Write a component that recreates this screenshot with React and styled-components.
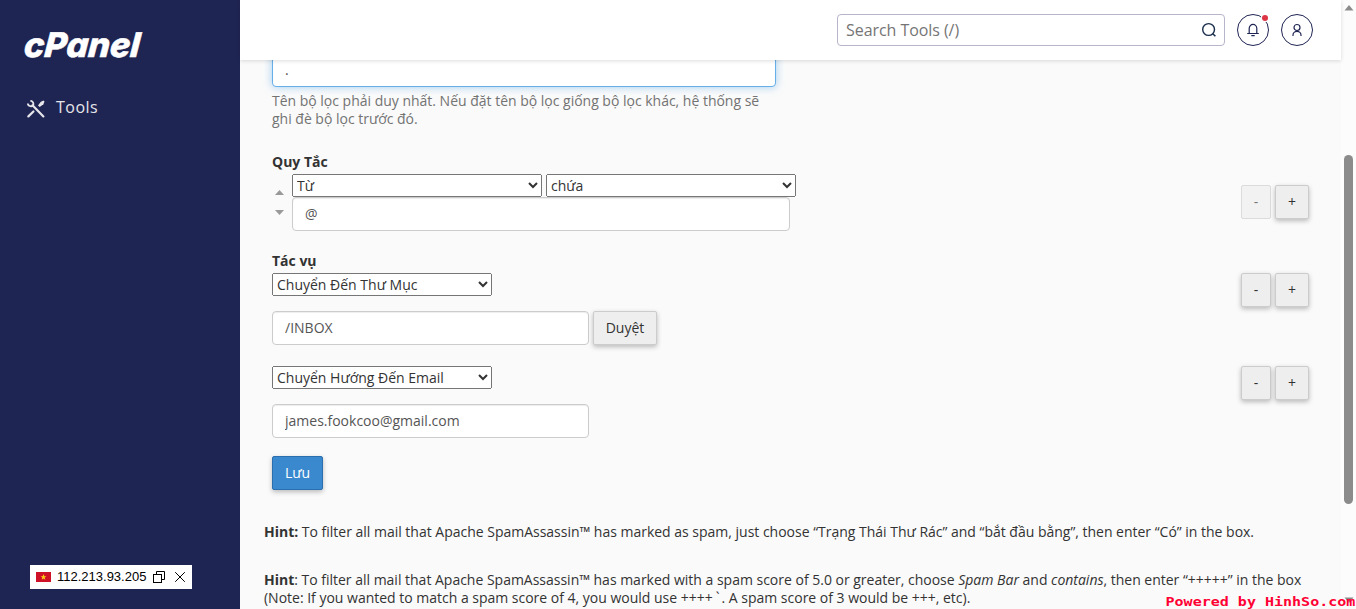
import React, { useState } from "react";
import styled, { createGlobalStyle, css } from "styled-components";

const App = () => {
  const [filterName, setFilterName] = useState(".");
  const [ruleValue, setRuleValue] = useState("@");
  const [folder, setFolder] = useState("/INBOX");
  const [email, setEmail] = useState("james.fookcoo@gmail.com");

  return (
    <>
      <GlobalStyle />
      <Page>
        <Sidebar>
          <Logo viewBox="0 0 120 28" role="img" aria-label="cPanel">
            <text
              x="0"
              y="25"
              textLength="116"
              lengthAdjust="spacingAndGlyphs"
              transform="translate(1.5 0) skewX(-5)"
            >
              cPanel
            </text>
          </Logo>
          <NavItem>
            <ToolsIcon />
            <span>Tools</span>
          </NavItem>
          <IpBadge>
            <FlagIcon />
            <IpText>112.213.93.205</IpText>
            <CopyIcon />
            <CloseIcon />
          </IpBadge>
        </Sidebar>

        <Main>
          <Header>
            <SearchBox>
              <SearchInput placeholder="Search Tools (/)" />
              <SearchIcon />
            </SearchBox>
            <RoundButton>
              <BellIcon />
              <Dot />
            </RoundButton>
            <RoundButton>
              <UserIcon />
            </RoundButton>
          </Header>

          <Content>
            <Form>
              <TextInput
                $width={504}
                $focused
                value={filterName}
                onChange={(e) => setFilterName(e.target.value)}
              />
              <HelpText>
                Tên bộ lọc phải duy nhất. Nếu đặt tên bộ lọc giống bộ lọc khác,
                hệ thống sẽ ghi đè bộ lọc trước đó.
              </HelpText>

              <Label>Quy Tắc</Label>
              <RuleRow>
                <Arrows>
                  <Triangle viewBox="0 0 9 5">
                    <path d="M4.5 0L9 5H0Z" />
                  </Triangle>
                  <Triangle viewBox="0 0 9 5">
                    <path d="M0 0H9L4.5 5Z" />
                  </Triangle>
                </Arrows>
                <RuleFields>
                  <SelectPair>
                    <Select $width={250}>
                      <option>Từ</option>
                    </Select>
                    <Select $width={250}>
                      <option>chứa</option>
                    </Select>
                  </SelectPair>
                  <TextInput
                    $width={498}
                    value={ruleValue}
                    onChange={(e) => setRuleValue(e.target.value)}
                  />
                </RuleFields>
                <Stepper $top={11} minusDisabled />
              </RuleRow>

              <Label $top={21}>Tác vụ</Label>
              <ActionRow>
                <ActionFields>
                  <Select $width={220}>
                    <option>Chuyển Đến Thư Mục</option>
                  </Select>
                  <InputLine>
                    <TextInput
                      $width={317}
                      value={folder}
                      onChange={(e) => setFolder(e.target.value)}
                    />
                    <Button $width={64}>Duyệt</Button>
                  </InputLine>
                </ActionFields>
                <Stepper />
              </ActionRow>
              <ActionRow $top={21}>
                <ActionFields>
                  <Select $width={220}>
                    <option>Chuyển Hướng Đến Email</option>
                  </Select>
                  <TextInput
                    $width={317}
                    value={email}
                    onChange={(e) => setEmail(e.target.value)}
                  />
                </ActionFields>
                <Stepper />
              </ActionRow>

              <SaveButton $width={51}>Lưu</SaveButton>
            </Form>

            <Hint>
              <b>Hint:</b> To filter all mail that Apache SpamAssassin™ has
              marked as spam, just choose “Trạng Thái Thư Rác” and “bắt đầu
              bằng”, then enter “Có” in the box.
            </Hint>
            <Hint>
              <b>Hint</b>: To filter all mail that Apache SpamAssassin™ has
              marked with a spam score of 5.0 or greater, choose{" "}
              <i>Spam Bar</i> and <i>contains</i>, then enter “+++++” in the box
              <br />
              (Note: If you wanted to match a spam score of 4, you would use
              ++++<Tick>`</Tick>. A spam score of 3 would be +++, etc).
            </Hint>
          </Content>
        </Main>

        <ScrollTrack>
          <ScrollArrow viewBox="0 0 10 6">
            <path d="M5 0L9.5 5.5H0.5Z" />
          </ScrollArrow>
          <ScrollThumb />
          <ScrollArrow viewBox="0 0 10 6">
            <path d="M0.5 0.5H9.5L5 6Z" />
          </ScrollArrow>
        </ScrollTrack>
        <Watermark>Powered by HinhSo.com</Watermark>
      </Page>
    </>
  );
};

export default App;

const Stepper = ({ $top = 0, minusDisabled }) => (
  <StepperWrap $top={$top}>
    <Button $width={30} disabled={minusDisabled}>
      -
    </Button>
    <Button $width={34}>+</Button>
  </StepperWrap>
);

const ToolsIcon = () => (
  <svg width="18" height="18" viewBox="0 0 18 18" fill="none">
    <path
      d="M1.4 16.4L6.4 11.5"
      stroke="#e6e6ea"
      strokeWidth="2.2"
      strokeLinecap="round"
    />
    <path
      d="M5.5 5.3L16.4 16.4"
      stroke="#e6e6ea"
      strokeWidth="2.2"
      strokeLinecap="round"
    />
    <path
      d="M3.4 0.8A3.1 3.1 0 0 1 5.9 5.5A3.1 3.1 0 0 1 0.8 3.5"
      stroke="#e6e6ea"
      strokeWidth="1.8"
    />
    <path
      d="M11 5.5L13.6 1.9L16.4 0.6L17.5 1.6L16.4 4.3L12.7 7.1Z"
      fill="#e6e6ea"
    />
  </svg>
);

const FlagIcon = () => (
  <svg width="15" height="10" viewBox="0 0 15 10">
    <rect width="15" height="10" fill="#ce1126" />
    <path
      d="M7.5 2L8.3 4.2H10.4L8.7 5.5L9.3 7.7L7.5 6.4L5.7 7.7L6.3 5.5L4.6 4.2H6.7Z"
      fill="#fcd116"
    />
  </svg>
);

const CopyIcon = () => (
  <svg width="12" height="12" viewBox="0 0 12 12" fill="none" stroke="#000">
    <path d="M3.5 3V0.5H11.5V8.5H8.5" />
    <rect x="0.5" y="3.5" width="8" height="8" />
  </svg>
);

const CloseIcon = () => (
  <svg width="10" height="10" viewBox="0 0 10 10" stroke="#000">
    <path d="M0.2 0.2L9.8 9.8M9.8 0.2L0.2 9.8" />
  </svg>
);

const SearchIcon = () => (
  <svg width="16" height="16" viewBox="0 0 16 16" fill="none" stroke="#1a2e4c">
    <circle cx="7.6" cy="7.5" r="5.9" strokeWidth="1.4" />
    <path d="M11.8 11.7L14.4 14.3" strokeWidth="1.6" />
  </svg>
);

const BellIcon = () => (
  <svg
    width="14"
    height="14"
    viewBox="0 0 14 14"
    fill="none"
    stroke="#1f2553"
    strokeWidth="1.2"
  >
    <path d="M3.2 10.5V5.6A3.8 4.2 0 0 1 10.8 5.6V10.5M1.2 10.5H12.8M5.3 12.7H8.7" />
  </svg>
);

const UserIcon = () => (
  <svg
    width="14"
    height="14"
    viewBox="0 0 14 14"
    fill="none"
    stroke="#1f2553"
    strokeWidth="1.2"
  >
    <circle cx="7" cy="4.5" r="3" />
    <path d="M3 13V12A4 3.6 0 0 1 11 12V13" />
  </svg>
);

const GlobalStyle = createGlobalStyle`
  * {
    box-sizing: border-box;
  }
  body {
    margin: 0;
    overflow: hidden;
    color: #333333;
    font-family: "Open Sans", "Noto Sans", sans-serif;
    font-size: 14px;
    line-height: 18px;
  }
  input, select, button {
    margin: 0;
    font-family: inherit;
    font-size: 14px;
  }
`;

const Page = styled.div`
  position: relative;
  display: flex;
  width: 1356px;
  height: 609px;
  overflow: hidden;
  background-color: #fafafa;
`;

const Sidebar = styled.aside`
  display: flex;
  flex-direction: column;
  align-items: flex-start;
  flex: none;
  width: 240px;
  padding: 32px 0 20px;
  background-color: #1f2553;
`;

const Logo = styled.svg`
  width: 120px;
  height: 28px;
  margin-left: 24px;
  overflow: visible;
  text {
    fill: #ffffff;
    stroke: #ffffff;
    stroke-width: 0.6px;
    font-family: "Inter", sans-serif;
    font-size: 34px;
    font-style: italic;
    font-weight: 800;
  }
`;

const NavItem = styled.div`
  display: flex;
  align-items: center;
  height: 24px;
  margin: 35px 0 0 27px;
  gap: 11px;
  color: #e6e6ea;
  font-size: 16px;
  letter-spacing: 0.5px;
  svg {
    margin-top: 3px;
  }
`;

const IpBadge = styled.div`
  display: flex;
  align-items: center;
  width: 162px;
  height: 24px;
  margin: auto 0 0 30px;
  padding-left: 6px;
  background-color: #ffffff;
  color: #000000;
`;

const IpText = styled.span`
  width: 96px;
  margin-left: 6px;
  font-family: "Liberation Sans", Arial, sans-serif;
  font-size: 13px;
  & + svg + svg {
    margin-left: 10px;
  }
`;

const Main = styled.main`
  display: flex;
  flex-direction: column;
  flex: 1;
  min-width: 0;
`;

const Header = styled.header`
  position: relative;
  z-index: 1;
  display: flex;
  align-items: center;
  justify-content: flex-end;
  flex: none;
  height: 60px;
  padding-right: 28px;
  gap: 12px;
  background-color: #ffffff;
  box-shadow: 0 1px 4px rgba(0, 0, 0, 0.14);
`;

const SearchBox = styled.div`
  display: flex;
  align-items: center;
  width: 388px;
  height: 32px;
  padding: 0 7px 0 8px;
  border: 1px solid #b7b5c9;
  border-radius: 4px;
`;

const SearchInput = styled.input`
  flex: 1;
  padding: 0;
  border: none;
  outline: none;
  background: none;
  font-size: 16px;
  letter-spacing: -0.06px;
  &::placeholder {
    color: #757575;
  }
`;

const RoundButton = styled.div`
  position: relative;
  display: flex;
  align-items: center;
  justify-content: center;
  width: 32px;
  height: 32px;
  border: 1px solid #1f2553;
  border-radius: 50%;
`;

const Dot = styled.span`
  position: absolute;
  top: 0;
  right: 0;
  width: 6px;
  height: 6px;
  border-radius: 50%;
  background-color: #dc3545;
  box-shadow: 0 0 0 1px #ffffff;
`;

const Content = styled.div`
  margin-top: -7px;
  padding: 0 32px 0 24px;
`;

const Form = styled.div`
  padding-left: 8px;
`;

const TextInput = styled.input`
  display: block;
  width: ${({ $width }) => $width}px;
  height: 34px;
  padding: 5px 12px 7px;
  border: 1px solid #cccccc;
  border-radius: 4px;
  outline: none;
  background-color: #ffffff;
  color: #555555;
  box-shadow: inset 0 1px 1px rgba(0, 0, 0, 0.075);
  ${({ $focused }) =>
    $focused &&
    css`
      border-color: #66afe9;
      box-shadow: inset 0 1px 1px rgba(0, 0, 0, 0.075),
        0 0 8px rgba(102, 175, 233, 0.6);
    `}
`;

const HelpText = styled.p`
  width: 504px;
  margin: 5px 0 25px;
  color: #737373;
  letter-spacing: -0.01px;
`;

const Label = styled.div`
  margin: ${({ $top = 0 }) => $top}px 0 3px;
  font-weight: 700;
`;

const RuleRow = styled.div`
  display: flex;
  align-items: flex-start;
`;

const Arrows = styled.div`
  display: flex;
  flex-direction: column;
  width: 20px;
  padding: 16px 0 0 3px;
  gap: 15px;
`;

const Triangle = styled.svg`
  width: 9px;
  height: 5px;
  fill: #999999;
`;

const RuleFields = styled.div`
  flex: 1;
`;

const SelectPair = styled.div`
  display: flex;
  gap: 4px;
`;

const Select = styled.select`
  display: block;
  width: ${({ $width }) => $width}px;
  height: 23px;
  color: #333333;
`;

const StepperWrap = styled.div`
  display: flex;
  gap: 4px;
  margin-top: ${({ $top }) => $top}px;
`;

const ActionRow = styled.div`
  display: flex;
  align-items: flex-start;
  justify-content: space-between;
  margin-top: ${({ $top = 0 }) => $top}px;
`;

const ActionFields = styled.div`
  display: flex;
  flex-direction: column;
  gap: 15px;
`;

const InputLine = styled.div`
  display: flex;
  gap: 4px;
`;

const Button = styled.button`
  width: ${({ $width }) => $width}px;
  height: 34px;
  padding: 0;
  border: 1px solid #cccccc;
  border-radius: 2px;
  background-color: #eeeeee;
  color: #333333;
  line-height: 18px;
  box-shadow: 0 2px 5px rgba(0, 0, 0, 0.26);
  &:disabled {
    opacity: 0.65;
    box-shadow: none;
  }
`;

const SaveButton = styled(Button)`
  display: block;
  margin-top: 18px;
  border-color: #2a6fb0;
  background-color: #3a89cf;
  color: #ffffff;
`;

const Hint = styled.p`
  margin: 33px 0 30px;
  white-space: nowrap;
  letter-spacing: -0.009px;
  & + & {
    margin-top: 0;
  }
`;

const Tick = styled.span`
  margin: 0 2px 0 3px;
`;

const ScrollTrack = styled.div`
  display: flex;
  flex-direction: column;
  align-items: center;
  flex: none;
  width: 15px;
  padding: 5px 0 6px;
  background-color: #fcfcfc;
`;

const ScrollArrow = styled.svg`
  width: 10px;
  height: 6px;
  fill: #8b8b8b;
`;

const ScrollThumb = styled.div`
  width: 9px;
  height: 349px;
  margin: 144px 0 auto;
  border-radius: 5px;
  background-color: #8b8b8b;
`;

const Watermark = styled.div`
  position: absolute;
  right: 1px;
  bottom: 0;
  color: #ff0033;
  font-family: "DejaVu Sans Mono", monospace;
  font-size: 13px;
  font-weight: 700;
  line-height: 15px;
  transform: scaleX(1.155);
  transform-origin: right;
`;
